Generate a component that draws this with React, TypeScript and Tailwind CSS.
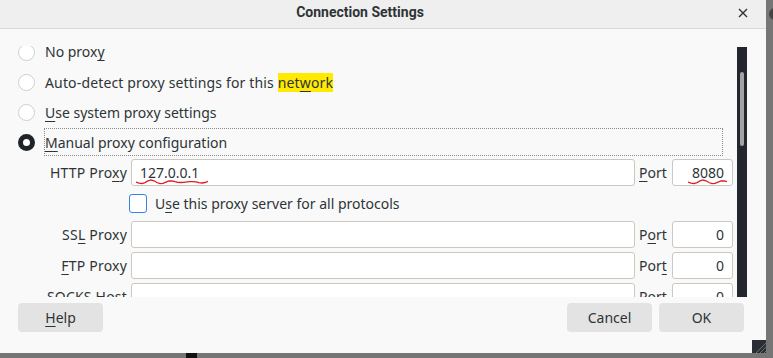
// Connection Settings dialog (proxy configuration), scrolled a little.

const FONT = { fontFamily: '"Noto Sans", "Open Sans", sans-serif' };

function U({ children }: { children: string }) {
  return <span className="underline decoration-1 underline-offset-[3px]">{children}</span>;
}

function Radio({ checked }: { checked?: boolean }) {
  if (checked) {
    return <span className="block h-[17px] w-[17px] shrink-0 rounded-full border-[5px] border-[#1f2229] bg-white" />;
  }
  return <span className="block h-[17px] w-[17px] shrink-0 rounded-full border border-[#cfcfcf] bg-white" />;
}

function Squiggle({ width }: { width: number }) {
  const pts: string[] = [];
  for (let x = 0; x <= width; x += 3) {
    const y = 3 + Math.sin(x / 3.2) * 2 * (0.6 + 0.4 * Math.sin(x / 11));
    pts.push(`${x},${y.toFixed(1)}`);
  }
  return (
    <svg width={width} height={7} className="absolute" style={{ left: 0, top: 0 }}>
      <polyline points={pts.join(' ')} fill="none" stroke="#e01b24" strokeWidth="1.3" />
    </svg>
  );
}

function Field({ value, right, squiggle }: { value?: string; right?: boolean; squiggle?: { left: number; width: number } }) {
  return (
    <div
      className={`relative flex h-[27px] items-center rounded-[3px] border border-[#cdc7c2] bg-white px-2 text-[14px] text-[#2e3436] ${
        right ? 'justify-end' : ''
      }`}
    >
      {value}
      {squiggle && (
        <div className="absolute top-[19px]" style={{ left: squiggle.left, width: squiggle.width }}>
          <Squiggle width={squiggle.width} />
        </div>
      )}
    </div>
  );
}

function ProxyRow({
  label,
  port,
  value,
  portValue,
  squiggle,
  portSquiggle,
}: {
  label: React.ReactNode;
  port: React.ReactNode;
  value?: string;
  portValue: string;
  squiggle?: { left: number; width: number };
  portSquiggle?: { left: number; width: number };
}) {
  return (
    <div className="grid grid-cols-[127px_504px_29px_61px] items-center gap-x-1">
      <div className="text-right tracking-[0.2px]">{label}</div>
      <Field value={value} squiggle={squiggle} />
      <div>{port}</div>
      <Field value={portValue} right squiggle={portSquiggle} />
    </div>
  );
}

function Button({ children, className = '' }: { children: React.ReactNode; className?: string }) {
  return (
    <div className={`flex h-[29px] w-[85px] items-center justify-center rounded-[4px] bg-[#e3e3e3] ${className}`}>
      {children}
    </div>
  );
}

export default function App() {
  return (
    <div className="relative h-[358px] w-[773px] overflow-hidden bg-[#767676] text-[14px] text-[#2e3436]" style={FONT}>
      <div className="flex h-[353px] w-[766px] flex-col bg-[#f9f9f9]">
        {/* title bar */}
        <div className="relative flex h-[29px] shrink-0 items-center justify-center border-b border-[#d8d8d8] bg-[#efefef] pb-[3px] pr-[46px]">
          <span className="text-[14px] font-bold" style={{ fontFamily: 'Roboto, "Noto Sans", sans-serif' }}>
            Connection Settings
          </span>
          <svg className="absolute left-[738px] top-[8px]" width="10" height="10" viewBox="0 0 10 10">
            <path d="M1 1 L9 9 M9 1 L1 9" stroke="#2e3436" strokeWidth="1.4" />
          </svg>
        </div>

        {/* scrolled content */}
        <div className="mt-[17px] flex h-[251px] shrink-0">
          <div className="relative w-[737px] overflow-hidden">
            <div className="-mt-[9px] flex flex-col">
              <label className="flex h-[30px] items-center gap-[10px] pl-[18px]">
                <Radio />
                <span className="leading-[16px]">
                  No prox<U>y</U>
                </span>
              </label>
              <label className="flex h-[30px] items-center gap-[10px] pl-[18px]">
                <Radio />
                <span className="tracking-[0.15px]">
                  Auto-detect proxy settings for this{' '}
                  <span className="bg-[#ffea00]">
                    net<U>w</U>ork
                  </span>
                </span>
              </label>
              <label className="flex h-[30px] items-center gap-[10px] pl-[18px]">
                <Radio />
                <span>
                  <U>U</U>se system proxy settings
                </span>
              </label>
              <label className="flex h-[30px] items-center gap-[9px] pl-[18px]">
                <Radio checked />
                <span className="flex h-[28px] w-[679px] items-center border border-dotted border-[#8a8a8a]">
                  <span>
                    <U>M</U>anual proxy configuration
                  </span>
                </span>
              </label>

              <div className="mt-[2px]">
                <ProxyRow
                  label={
                    <>
                      HTTP Pro<U>x</U>y
                    </>
                  }
                  port={
                    <>
                      <U>P</U>ort
                    </>
                  }
                  value="127.0.0.1"
                  portValue="8080"
                  squiggle={{ left: 4, width: 72 }}
                  portSquiggle={{ left: 15, width: 40 }}
                />
              </div>
              <div className="flex h-[35px] items-center gap-2 pl-[129px]">
                <span className="block h-[19px] w-[18px] rounded-[3px] border border-[#3584e4] bg-white" />
                <span>
                  U<U>s</U>e this proxy server for all protocols
                </span>
              </div>
              <ProxyRow
                label={
                  <>
                    SS<U>L</U> Proxy
                  </>
                }
                port={
                  <>
                    P<U>o</U>rt
                  </>
                }
                portValue="0"
              />
              <div className="mt-[4px]">
                <ProxyRow
                  label={
                    <>
                      <U>F</U>TP Proxy
                    </>
                  }
                  port={
                    <>
                      Por<U>t</U>
                    </>
                  }
                  portValue="0"
                />
              </div>
              <div className="mt-[4px]">
                <ProxyRow label="SOCKS Host" port="Port" portValue="0" />
              </div>
            </div>
          </div>
          {/* scrollbar */}
          <div className="mt-[1px] h-[250px] w-[10px] bg-[#23262e] pt-[25px]">
            <div className="mx-auto h-[74px] w-[4px] rounded-full bg-[#a3a3a3]" />
          </div>
        </div>

        {/* buttons */}
        <div className="flex flex-1 items-start pt-[6px]">
          <Button className="ml-[18px]">
            <span>
              <U>H</U>elp
            </span>
          </Button>
          <Button className="ml-auto">Cancel</Button>
          <Button className="ml-[7px] mr-[22px]">OK</Button>
        </div>
      </div>

      {/* resize grip */}
      <svg className="absolute left-[752px] top-[340px]" width="14" height="13" viewBox="0 0 14 13">
        <rect width="14" height="13" fill="#2a2d33" />
        <path d="M4 13 L14 3 M8 13 L14 7 M12 13 L14 11" stroke="#6b6f76" strokeWidth="1" />
      </svg>
      {/* desktop bits behind the dialog */}
      <div className="absolute left-[186px] top-[353px] h-[5px] w-[11px] bg-[#111]" />
      <div className="absolute left-[769px] top-[8px] h-[12px] w-[12px] rounded-full bg-[#444]" />
    </div>
  );
}
